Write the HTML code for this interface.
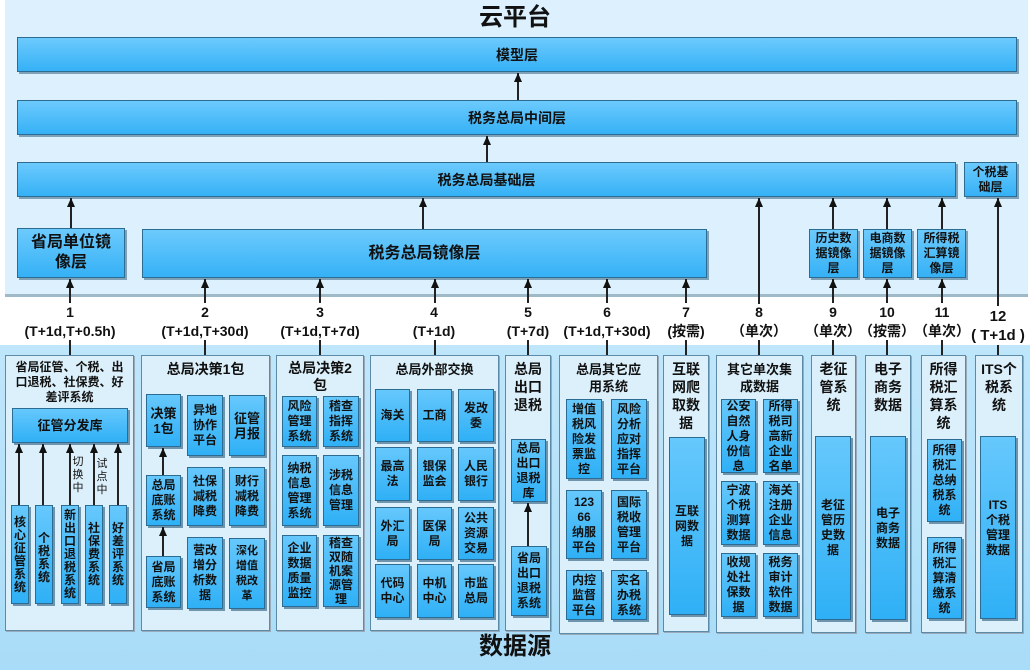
<!DOCTYPE html>
<html><head><meta charset="utf-8">
<style>
*{margin:0;padding:0;box-sizing:border-box}
body{width:1030px;height:670px;position:relative;overflow:hidden;background:#fff;font-family:"Liberation Sans","Noto Sans CJK SC",sans-serif;font-weight:bold;color:#111}
div{position:absolute}
.top{left:5px;top:0;width:1023px;height:297px;background:#dcf0fd;border-bottom:3px solid #9fb9c9}
.bot{left:0;top:345px;width:1030px;height:325px;background:linear-gradient(#bfe6fb,#a9dcf8)}
.bar{background:linear-gradient(#6ccafd,#35b1f6);border:1px solid #2c6c92;box-shadow:2px 2px 0 #7fa2b8;display:flex;align-items:center;justify-content:center;text-align:center;font-size:14px;line-height:16px}
.b{background:linear-gradient(#66c8fc,#2fb0f6);border:1px solid #2c6c92;box-shadow:2px 2px 0 #6f94ad;display:flex;align-items:center;justify-content:center;text-align:center;font-size:12px;line-height:15px;padding:0 2px}
.col{background:#dcf0fb;border:1px solid #5d8aa6;box-shadow:1px 1px 0 #9ab}
.t{text-align:center;font-size:14px;line-height:17px;left:0;right:0}
.ln{width:2px;background:#222}
.ah{width:0;height:0;border-left:4px solid transparent;border-right:4px solid transparent;border-bottom:9px solid #111}
.lab{text-align:center;font-size:14px;line-height:19px;width:120px}
.v{font-size:12px;line-height:13px;align-items:flex-start;padding:8px 0 0}
.sm{font-size:11px;line-height:13px;width:12px;text-align:center;font-weight:normal}
</style></head><body>
<div class="top"></div>
<div style="left:0;top:3px;width:1030px;text-align:center;font-size:24px;line-height:30px">云平台</div>
<div class="bar" style="left:17px;top:37px;width:1000px;height:35px">模型层</div>
<div class="bar" style="left:17px;top:100px;width:1000px;height:35px">税务总局中间层</div>
<div class="bar" style="left:17px;top:162px;width:939px;height:35px">税务总局基础层</div>
<div class="bar" style="left:964px;top:162px;width:53px;height:35px;font-size:12px;line-height:15px">个税基<br>础层</div>
<div class="bar" style="left:17px;top:228px;width:108px;height:50px;font-size:16px;line-height:20px">省局单位镜<br>像层</div>
<div class="bar" style="left:142px;top:229px;width:565px;height:49px;font-size:16px">税务总局镜像层</div>
<div class="bar" style="left:809px;top:229px;width:49px;height:49px;font-size:12px;line-height:15px">历史数<br>据镜像<br>层</div>
<div class="bar" style="left:863px;top:229px;width:49px;height:49px;font-size:12px;line-height:15px">电商数<br>据镜像<br>层</div>
<div class="bar" style="left:917px;top:229px;width:49px;height:49px;font-size:12px;line-height:15px">所得税<br>汇算镜<br>像层</div>

<div class="ln" style="left:517px;top:73px;height:27px"></div><div class="ah" style="left:514px;top:73px"></div>
<div class="ln" style="left:486px;top:136px;height:26px"></div><div class="ah" style="left:483px;top:136px"></div>
<div class="ln" style="left:70px;top:198px;height:30px"></div><div class="ah" style="left:67px;top:198px"></div>
<div class="ln" style="left:422px;top:198px;height:31px"></div><div class="ah" style="left:419px;top:198px"></div>
<div class="ln" style="left:758px;top:198px;height:106px"></div><div class="ah" style="left:755px;top:198px"></div>
<div class="ln" style="left:832px;top:198px;height:31px"></div><div class="ah" style="left:829px;top:198px"></div>
<div class="ln" style="left:886px;top:198px;height:31px"></div><div class="ah" style="left:883px;top:198px"></div>
<div class="ln" style="left:941px;top:198px;height:31px"></div><div class="ah" style="left:938px;top:198px"></div>
<div class="ln" style="left:997px;top:198px;height:108px"></div><div class="ah" style="left:994px;top:198px"></div>
<div class="ln" style="left:69px;top:279px;height:24px"></div><div class="ah" style="left:66px;top:279px"></div>
<div class="ln" style="left:204px;top:279px;height:24px"></div><div class="ah" style="left:201px;top:279px"></div>
<div class="ln" style="left:319px;top:279px;height:24px"></div><div class="ah" style="left:316px;top:279px"></div>
<div class="ln" style="left:434px;top:279px;height:24px"></div><div class="ah" style="left:431px;top:279px"></div>
<div class="ln" style="left:527px;top:279px;height:24px"></div><div class="ah" style="left:524px;top:279px"></div>
<div class="ln" style="left:606px;top:279px;height:24px"></div><div class="ah" style="left:603px;top:279px"></div>
<div class="ln" style="left:685px;top:279px;height:24px"></div><div class="ah" style="left:682px;top:279px"></div>
<div class="ln" style="left:832px;top:279px;height:24px"></div><div class="ah" style="left:829px;top:279px"></div>
<div class="ln" style="left:886px;top:279px;height:24px"></div><div class="ah" style="left:883px;top:279px"></div>
<div class="ln" style="left:941px;top:279px;height:24px"></div><div class="ah" style="left:938px;top:279px"></div>

<div class="bot"></div>
<div class="lab" style="left:10px;top:303px">1<br>(T+1d,T+0.5h)</div>
<div class="lab" style="left:145px;top:303px">2<br>(T+1d,T+30d)</div>
<div class="lab" style="left:260px;top:303px">3<br>(T+1d,T+7d)</div>
<div class="lab" style="left:374px;top:303px">4<br>(T+1d)</div>
<div class="lab" style="left:468px;top:303px">5<br>(T+7d)</div>
<div class="lab" style="left:547px;top:303px">6<br>(T+1d,T+30d)</div>
<div class="lab" style="left:626px;top:303px">7<br>(按需)</div>
<div class="lab" style="left:699px;top:303px">8<br>（单次）</div>
<div class="lab" style="left:773px;top:303px">9<br>（单次）</div>
<div class="lab" style="left:827px;top:303px">10<br>（按需）</div>
<div class="lab" style="left:882px;top:303px">11<br>（单次）</div>
<div class="lab" style="left:968px;top:307px;width:60px;font-size:15px">12<br>( T+1d )</div>

<div class="ln" style="left:69px;top:340px;height:16px"></div>
<div class="ln" style="left:204px;top:340px;height:16px"></div>
<div class="ln" style="left:319px;top:340px;height:16px"></div>
<div class="ln" style="left:434px;top:340px;height:16px"></div>
<div class="ln" style="left:527px;top:340px;height:16px"></div>
<div class="ln" style="left:606px;top:340px;height:16px"></div>
<div class="ln" style="left:685px;top:340px;height:16px"></div>
<div class="ln" style="left:758px;top:340px;height:16px"></div>
<div class="ln" style="left:832px;top:340px;height:16px"></div>
<div class="ln" style="left:886px;top:340px;height:16px"></div>
<div class="ln" style="left:941px;top:340px;height:16px"></div>
<div class="ln" style="left:997px;top:345px;height:11px"></div>

<div class="col" style="left:5px;top:355px;width:129px;height:276px">
 <div class="t" style="top:4px;font-size:12px;line-height:15px">省局征管、个税、出<br>口退税、社保费、好<br>差评系统</div>
</div>
<div class="b" style="left:12px;top:408px;width:116px;height:35px;font-size:13px">征管分发库</div>
<div class="ln" style="left:18px;top:444px;height:61px"></div><div class="ah" style="left:15px;top:444px"></div>
<div class="ln" style="left:42px;top:444px;height:61px"></div><div class="ah" style="left:39px;top:444px"></div>
<div class="ln" style="left:69px;top:444px;height:61px"></div><div class="ah" style="left:66px;top:444px"></div>
<div class="ln" style="left:93px;top:444px;height:61px"></div><div class="ah" style="left:90px;top:444px"></div>
<div class="ln" style="left:117px;top:444px;height:61px"></div><div class="ah" style="left:114px;top:444px"></div>
<div class="sm" style="left:72px;top:456px">切<br>换<br>中</div>
<div class="sm" style="left:96px;top:458px">试<br>点<br>中</div>
<div class="b v" style="left:11px;top:505px;width:18px;height:99px;padding-top:10px">核<br>心<br>征<br>管<br>系<br>统</div>
<div class="b v" style="left:35px;top:505px;width:18px;height:99px;padding-top:26px">个<br>税<br>系<br>统</div>
<div class="b v" style="left:61px;top:505px;width:18px;height:99px;padding-top:3px">新<br>出<br>口<br>退<br>税<br>系<br>统</div>
<div class="b v" style="left:85px;top:505px;width:18px;height:99px;padding-top:16px">社<br>保<br>费<br>系<br>统</div>
<div class="b v" style="left:109px;top:505px;width:18px;height:99px;padding-top:16px">好<br>差<br>评<br>系<br>统</div>

<div class="col" style="left:141px;top:355px;width:129px;height:276px">
 <div class="t" style="top:5px">总局决策1包</div>
</div>
<div class="b" style="left:146px;top:394px;width:35px;height:53px;font-size:13px">决策<br>1包</div>
<div class="b" style="left:187px;top:395px;width:36px;height:61px">异地<br>协作<br>平台</div>
<div class="b" style="left:229px;top:395px;width:36px;height:61px;font-size:13px">征管<br>月报</div>
<div class="ln" style="left:162px;top:448px;height:27px"></div><div class="ah" style="left:159px;top:448px"></div>
<div class="b" style="left:146px;top:475px;width:35px;height:51px">总局<br>底账<br>系统</div>
<div class="b" style="left:187px;top:467px;width:36px;height:59px">社保<br>减税<br>降费</div>
<div class="b" style="left:229px;top:467px;width:36px;height:59px">财行<br>减税<br>降费</div>
<div class="ln" style="left:162px;top:527px;height:29px"></div><div class="ah" style="left:159px;top:527px"></div>
<div class="b" style="left:146px;top:556px;width:35px;height:52px">省局<br>底账<br>系统</div>
<div class="b" style="left:187px;top:537px;width:36px;height:72px">营改<br>增分<br>析数<br>据</div>
<div class="b" style="left:229px;top:538px;width:36px;height:71px;font-size:11px">深化<br>增值<br>税改<br>革</div>

<div class="col" style="left:276px;top:355px;width:88px;height:276px">
 <div class="t" style="top:4px;line-height:17px">总局决策2<br>包</div>
</div>
<div class="b" style="left:282px;top:396px;width:35px;height:51px">风险<br>管理<br>系统</div>
<div class="b" style="left:323px;top:396px;width:36px;height:51px">稽查<br>指挥<br>系统</div>
<div class="b" style="left:282px;top:455px;width:35px;height:71px">纳税<br>信息<br>管理<br>系统</div>
<div class="b" style="left:323px;top:455px;width:36px;height:71px">涉税<br>信息<br>管理</div>
<div class="b" style="left:282px;top:535px;width:35px;height:72px">企业<br>数据<br>质量<br>监控</div>
<div class="b" style="left:323px;top:535px;width:36px;height:72px;line-height:14px">稽查<br>双随<br>机案<br>源管<br>理</div>

<div class="col" style="left:370px;top:355px;width:129px;height:276px">
 <div class="t" style="top:5px;font-size:13px">总局外部交换</div>
</div>
<div class="b" style="left:375px;top:389px;width:35px;height:53px">海关</div>
<div class="b" style="left:417px;top:389px;width:35px;height:53px">工商</div>
<div class="b" style="left:458px;top:389px;width:36px;height:53px">发改<br>委</div>
<div class="b" style="left:375px;top:447px;width:35px;height:54px">最高<br>法</div>
<div class="b" style="left:417px;top:447px;width:35px;height:54px">银保<br>监会</div>
<div class="b" style="left:458px;top:447px;width:36px;height:54px">人民<br>银行</div>
<div class="b" style="left:375px;top:507px;width:35px;height:53px">外汇<br>局</div>
<div class="b" style="left:417px;top:507px;width:35px;height:53px">医保<br>局</div>
<div class="b" style="left:458px;top:507px;width:36px;height:53px">公共<br>资源<br>交易</div>
<div class="b" style="left:375px;top:564px;width:35px;height:54px">代码<br>中心</div>
<div class="b" style="left:417px;top:564px;width:35px;height:54px">中机<br>中心</div>
<div class="b" style="left:458px;top:564px;width:36px;height:54px">市监<br>总局</div>

<div class="col" style="left:505px;top:355px;width:46px;height:276px">
 <div class="t" style="top:4px;line-height:18px">总局<br>出口<br>退税</div>
</div>
<div class="b" style="left:511px;top:439px;width:35px;height:63px">总局<br>出口<br>退税<br>库</div>
<div class="ln" style="left:527px;top:503px;height:43px"></div><div class="ah" style="left:524px;top:503px"></div>
<div class="b" style="left:511px;top:546px;width:36px;height:70px">省局<br>出口<br>退税<br>系统</div>

<div class="col" style="left:559px;top:355px;width:99px;height:279px">
 <div class="t" style="top:5px;font-size:13px">总局其它应<br>用系统</div>
</div>
<div class="b" style="left:566px;top:399px;width:36px;height:80px">增值<br>税风<br>险发<br>票监<br>控</div>
<div class="b" style="left:611px;top:399px;width:36px;height:80px">风险<br>分析<br>应对<br>指挥<br>平台</div>
<div class="b" style="left:566px;top:490px;width:36px;height:69px">123<br>66<br>纳服<br>平台</div>
<div class="b" style="left:611px;top:490px;width:36px;height:69px">国际<br>税收<br>管理<br>平台</div>
<div class="b" style="left:566px;top:570px;width:36px;height:50px">内控<br>监督<br>平台</div>
<div class="b" style="left:611px;top:570px;width:36px;height:50px">实名<br>办税<br>系统</div>

<div class="col" style="left:663px;top:355px;width:46px;height:277px">
 <div class="t" style="top:4px;line-height:18px">互联<br>网爬<br>取数<br>据</div>
</div>
<div class="b" style="left:669px;top:437px;width:36px;height:178px">互联<br>网数<br>据</div>

<div class="col" style="left:716px;top:355px;width:87px;height:278px">
 <div class="t" style="top:5px;font-size:13px">其它单次集<br>成数据</div>
</div>
<div class="b" style="left:721px;top:399px;width:35px;height:74px">公安<br>自然<br>人身<br>份信<br>息</div>
<div class="b" style="left:763px;top:399px;width:35px;height:74px">所得<br>税司<br>高新<br>企业<br>名单</div>
<div class="b" style="left:721px;top:481px;width:35px;height:64px">宁波<br>个税<br>测算<br>数据</div>
<div class="b" style="left:763px;top:481px;width:35px;height:64px">海关<br>注册<br>企业<br>信息</div>
<div class="b" style="left:721px;top:553px;width:35px;height:64px">收规<br>处社<br>保数<br>据</div>
<div class="b" style="left:763px;top:553px;width:35px;height:64px">税务<br>审计<br>软件<br>数据</div>

<div class="col" style="left:811px;top:355px;width:45px;height:278px">
 <div class="t" style="top:4px;line-height:18px">老征<br>管系<br>统</div>
</div>
<div class="b" style="left:815px;top:436px;width:36px;height:184px">老征<br>管历<br>史数<br>据</div>

<div class="col" style="left:865px;top:355px;width:46px;height:278px">
 <div class="t" style="top:4px;line-height:18px">电子<br>商务<br>数据</div>
</div>
<div class="b" style="left:870px;top:436px;width:36px;height:184px">电子<br>商务<br>数据</div>

<div class="col" style="left:921px;top:355px;width:45px;height:278px">
 <div class="t" style="top:4px;line-height:18px">所得<br>税汇<br>算系<br>统</div>
</div>
<div class="b" style="left:927px;top:439px;width:35px;height:83px">所得<br>税汇<br>总纳<br>税系<br>统</div>
<div class="b" style="left:927px;top:537px;width:35px;height:82px">所得<br>税汇<br>算清<br>缴系<br>统</div>

<div class="col" style="left:975px;top:355px;width:48px;height:278px">
 <div class="t" style="top:4px;line-height:18px">ITS个<br>税系<br>统</div>
</div>
<div class="b" style="left:980px;top:436px;width:36px;height:183px">ITS<br>个税<br>管理<br>数据</div>

<div style="left:0;top:632px;width:1030px;text-align:center;font-size:24px;line-height:30px">数据源</div>
</body></html>
